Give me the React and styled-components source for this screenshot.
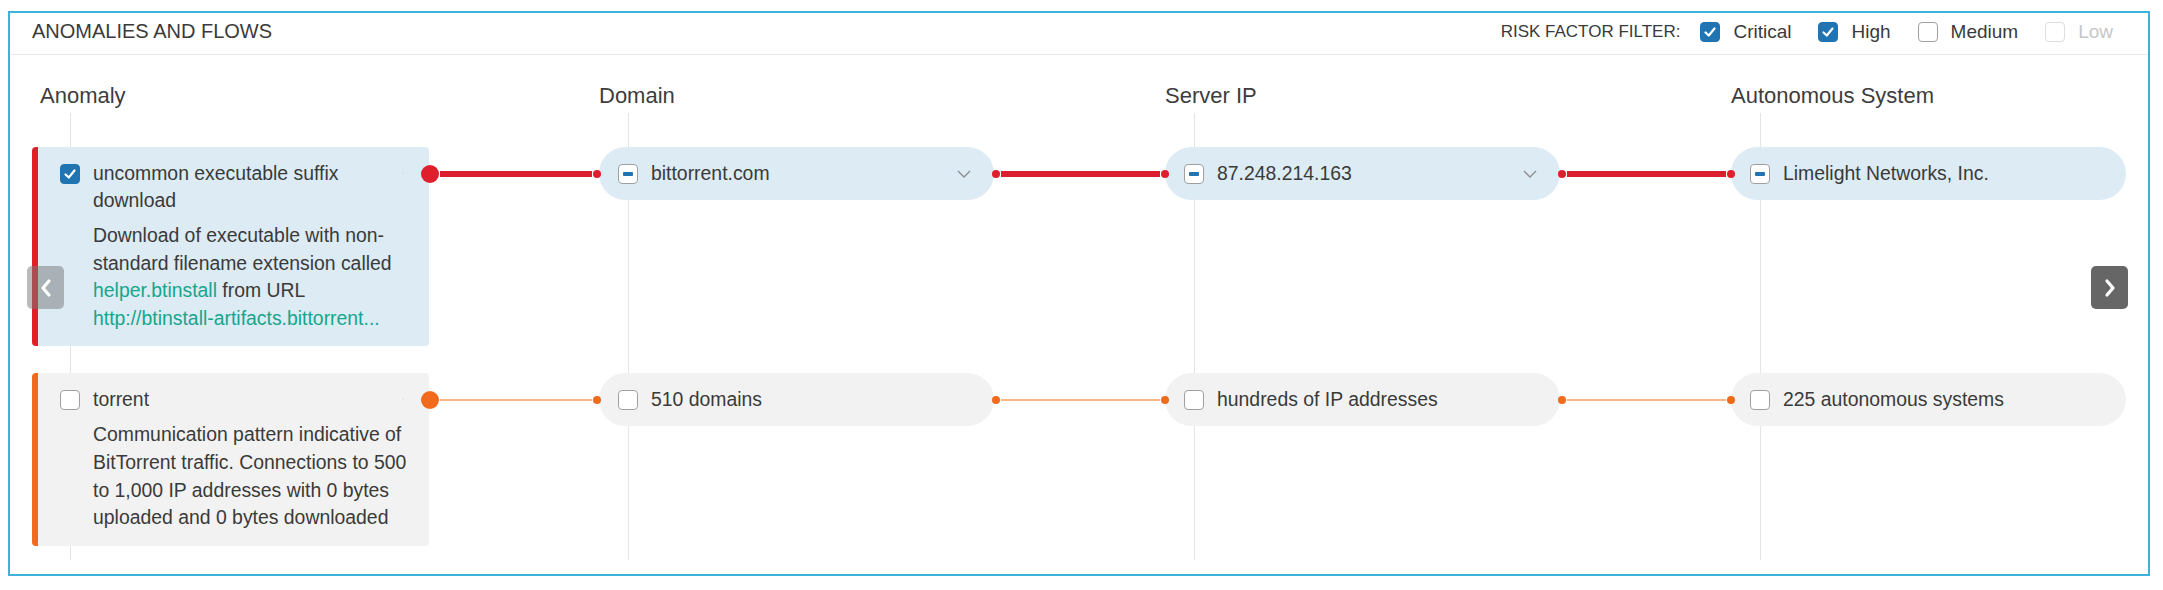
import styled, { createGlobalStyle } from 'styled-components'

const GlobalStyle = createGlobalStyle`
  html, body {
    margin: 0;
    padding: 0;
    background: #fff;
  }
  body {
    font-family: "Liberation Sans", Arial, sans-serif;
    color: #3a3a3a;
  }
`

// card, gap, pill, gap, pill, gap, pill
const COLS = '397px 170px 395px 171px 395px 171px 395px'

const risks = {
    critical: { bar: '#e01f2d', line: '#dc1f2e', thick: 6, bg: '#dcebf4' },
    high: { bar: '#f26b1d', line: '#f8b688', thick: 2, bg: '#f2f2f2' },
}

const Panel = styled.section`
  position: relative;
  box-sizing: border-box;
  width: 2142px;
  height: 565px;
  margin: 11px 0 0 8px;
  border: 2px solid #3db3da;
  background: #fff;
`

const Header = styled.header`
  box-sizing: border-box;
  height: 42px;
  padding: 0 35px 4px 22px;
  display: flex;
  align-items: center;
  justify-content: space-between;
  border-bottom: 1px solid #e9e9e9;
`

const Title = styled.h2`
  margin: 0;
  font-size: 20px;
  font-weight: normal;
  color: #3a3a3a;
  text-transform: uppercase;
`

const Filters = styled.div`
  display: flex;
  align-items: center;
`

const FilterLabel = styled.span`
  font-size: 17px;
  color: #3a3a3a;
  margin-right: 20px;
`

const FilterOption = styled.label`
  display: flex;
  align-items: center;
  gap: 13px;
  font-size: 19px;
  color: ${p => (p.$muted ? '#c6c6c6' : '#3a3a3a')};
  & + & {
    margin-left: 27px;
  }
`

const Box = styled.span`
  flex: none;
  box-sizing: border-box;
  width: 20px;
  height: 20px;
  display: inline-flex;
  align-items: center;
  justify-content: center;
  border-radius: 4px;
  border: 1.5px solid ${p => (p.$state === 'checked' ? '#1f74b1' : p.$muted ? '#dedede' : '#a0a0a0')};
  background: ${p => (p.$state === 'checked' ? '#1f74b1' : '#fff')};
`

const Dash = styled.span`
  width: 10px;
  height: 4px;
  border-radius: 1px;
  background: #1f74b1;
`

const Checkbox = ({ state, muted }) => (
    <Box $state={state} $muted={muted}>
        {state === 'checked' && (
            <svg width="14" height="14" viewBox="0 0 14 14">
                <polyline points="2.5,7.5 5.8,10.5 11.5,3.5" fill="none" stroke="#fff" strokeWidth="2.2" strokeLinecap="round" strokeLinejoin="round" />
            </svg>
        )}
        {state === 'partial' && <Dash />}
    </Box>
)

const Chevron = () => (
    <svg width="14" height="8" viewBox="0 0 14 8">
        <polyline points="1,1 7,7 13,1" fill="none" stroke="#8e8e8e" strokeWidth="1.4" />
    </svg>
)

const Content = styled.div`
  padding-left: 22px;
`

const LabelRow = styled.div`
  display: grid;
  grid-template-columns: ${COLS};
  margin-top: 28px;
  font-size: 22px;
  line-height: 25px;
  color: #3d3d3d;
`

const ColumnLabel = styled.div`
  grid-column: ${p => p.$col};
  padding-left: ${p => (p.$first ? '8px' : '0')};
`

const rail = x => `linear-gradient(#e4e4e4, #e4e4e4) ${x}px 0 / 1px 100% no-repeat`

const Flows = styled.div`
  margin-top: 5px;
  padding: 34px 0 14px;
  display: flex;
  flex-direction: column;
  gap: 27px;
  background: ${[38, 596, 1162, 1728].map(rail).join(', ')};
`

const Row = styled.div`
  display: grid;
  grid-template-columns: ${COLS};
  align-items: start;
`

const Card = styled.div`
  box-sizing: border-box;
  display: grid;
  grid-template-columns: 20px 1fr 14px;
  column-gap: 13px;
  padding: 13px 13px 14px 22px;
  border-left: 6px solid ${p => p.$bar};
  border-radius: 4px;
  background: ${p => p.$bg};
  font-size: 19.4px;
  line-height: 27px;
  color: #3a3a3a;

  & > ${Box} {
    margin-top: 3.5px;
  }
`

const CardTitle = styled.div``

const CardChevron = styled.span`
  margin: 9px 12px 0 0;
  display: flex;
`

const CardText = styled.div`
  grid-column: 2 / 4;
  margin-top: 8px;
  line-height: 27.6px;
`

const Link = styled.span`
  color: #17a58c;
`

const Url = styled.span`
  display: block;
  white-space: nowrap;
  color: #17a58c;
`

const Pill = styled.div`
  box-sizing: border-box;
  height: 53px;
  display: flex;
  align-items: center;
  gap: 13px;
  padding: 0 23px 0 19px;
  border-radius: 27px;
  background: ${p => p.$bg};
  font-size: 19.4px;
  color: #3a3a3a;
`

const PillText = styled.span`
  flex: 1;
  white-space: nowrap;
`

const Connector = styled.div`
  position: relative;
  z-index: 1;
  height: 53px;
  display: flex;
  align-items: center;
  margin: ${p => (p.$fromCard ? '0 -2px 0 -8px' : '0 -4px 0 -2px')};
`

const Dot = styled.span`
  flex: none;
  width: ${p => p.$size}px;
  height: ${p => p.$size}px;
  border-radius: 50%;
  background: ${p => p.$color};
`

const Line = styled.span`
  flex: 1;
  height: ${p => p.$thick}px;
  background: ${p => p.$color};
  margin: 0 1px;
`

const NavButton = styled.button`
  position: absolute;
  top: 253px;
  ${p => (p.$side === 'left' ? 'left: 17px;' : 'right: 20px;')}
  width: 37px;
  height: 43px;
  padding: 0;
  border: none;
  border-radius: 5px;
  display: flex;
  align-items: center;
  justify-content: center;
  background: ${p => (p.$side === 'left' ? 'rgba(120, 120, 120, 0.5)' : '#666')};
`

const NavArrow = ({ dir }) => (
    <svg width="14" height="20" viewBox="0 0 14 20">
        <polyline points={dir === 'left' ? '10,3 4,10 10,17' : '4,3 10,10 4,17'} fill="none" stroke="#fff" strokeWidth="3.2" strokeLinecap="round" strokeLinejoin="round" />
    </svg>
)

const filters = [
    { label: 'Critical', state: 'checked' },
    { label: 'High', state: 'checked' },
    { label: 'Medium', state: 'empty' },
    { label: 'Low', state: 'empty', muted: true },
]

const columns = ['Anomaly', 'Domain', 'Server IP', 'Autonomous System']

const flows = [
    {
        risk: 'critical',
        state: 'checked',
        title: 'uncommon executable suffix download',
        text: (
            <>
                Download of executable with non-standard filename extension called <Link>helper.btinstall</Link> from URL
                <Url>http://btinstall-artifacts.bittorrent...</Url>
            </>
        ),
        nodes: [
            { label: 'bittorrent.com', state: 'partial', chevron: true },
            { label: '87.248.214.163', state: 'partial', chevron: true },
            { label: 'Limelight Networks, Inc.', state: 'partial' },
        ],
    },
    {
        risk: 'high',
        state: 'empty',
        title: 'torrent',
        text: 'Communication pattern indicative of BitTorrent traffic. Connections to 500 to 1,000 IP addresses with 0 bytes uploaded and 0 bytes downloaded',
        nodes: [
            { label: '510 domains', state: 'empty' },
            { label: 'hundreds of IP addresses', state: 'empty' },
            { label: '225 autonomous systems', state: 'empty' },
        ],
    },
]

const FlowLink = ({ risk, fromCard }) => {
    const r = risks[risk]
    return (
        <Connector $fromCard={fromCard}>
            <Dot $size={fromCard ? 18 : 8} $color={r.bar} />
            <Line $thick={r.thick} $color={r.line} />
            <Dot $size={8} $color={r.bar} />
        </Connector>
    )
}

export default function App() {
    return (
        <>
            <GlobalStyle />
            <Panel>
                <Header>
                    <Title>Anomalies and Flows</Title>
                    <Filters>
                        <FilterLabel>RISK FACTOR FILTER:</FilterLabel>
                        {filters.map(f => (
                            <FilterOption key={f.label} $muted={f.muted}>
                                <Checkbox state={f.state} muted={f.muted} />
                                {f.label}
                            </FilterOption>
                        ))}
                    </Filters>
                </Header>
                <Content>
                    <LabelRow>
                        {columns.map((c, i) => (
                            <ColumnLabel key={c} $col={i * 2 + 1} $first={i === 0}>{c}</ColumnLabel>
                        ))}
                    </LabelRow>
                    <Flows>
                        {flows.map(f => {
                            const r = risks[f.risk]
                            return (
                                <Row key={f.title}>
                                    <Card $bar={r.bar} $bg={r.bg}>
                                        <Checkbox state={f.state} />
                                        <CardTitle>{f.title}</CardTitle>
                                        <CardChevron><Chevron /></CardChevron>
                                        <CardText>{f.text}</CardText>
                                    </Card>
                                    <FlowLink risk={f.risk} fromCard />
                                    {f.nodes.map((n, i) => [
                                        <Pill key={n.label} $bg={r.bg}>
                                            <Checkbox state={n.state} />
                                            <PillText>{n.label}</PillText>
                                            {n.chevron && <Chevron />}
                                        </Pill>,
                                        i < f.nodes.length - 1 && <FlowLink key={n.label + '-link'} risk={f.risk} />,
                                    ])}
                                </Row>
                            )
                        })}
                    </Flows>
                </Content>
                <NavButton $side="left"><NavArrow dir="left" /></NavButton>
                <NavButton $side="right"><NavArrow dir="right" /></NavButton>
            </Panel>
        </>
    )
}
